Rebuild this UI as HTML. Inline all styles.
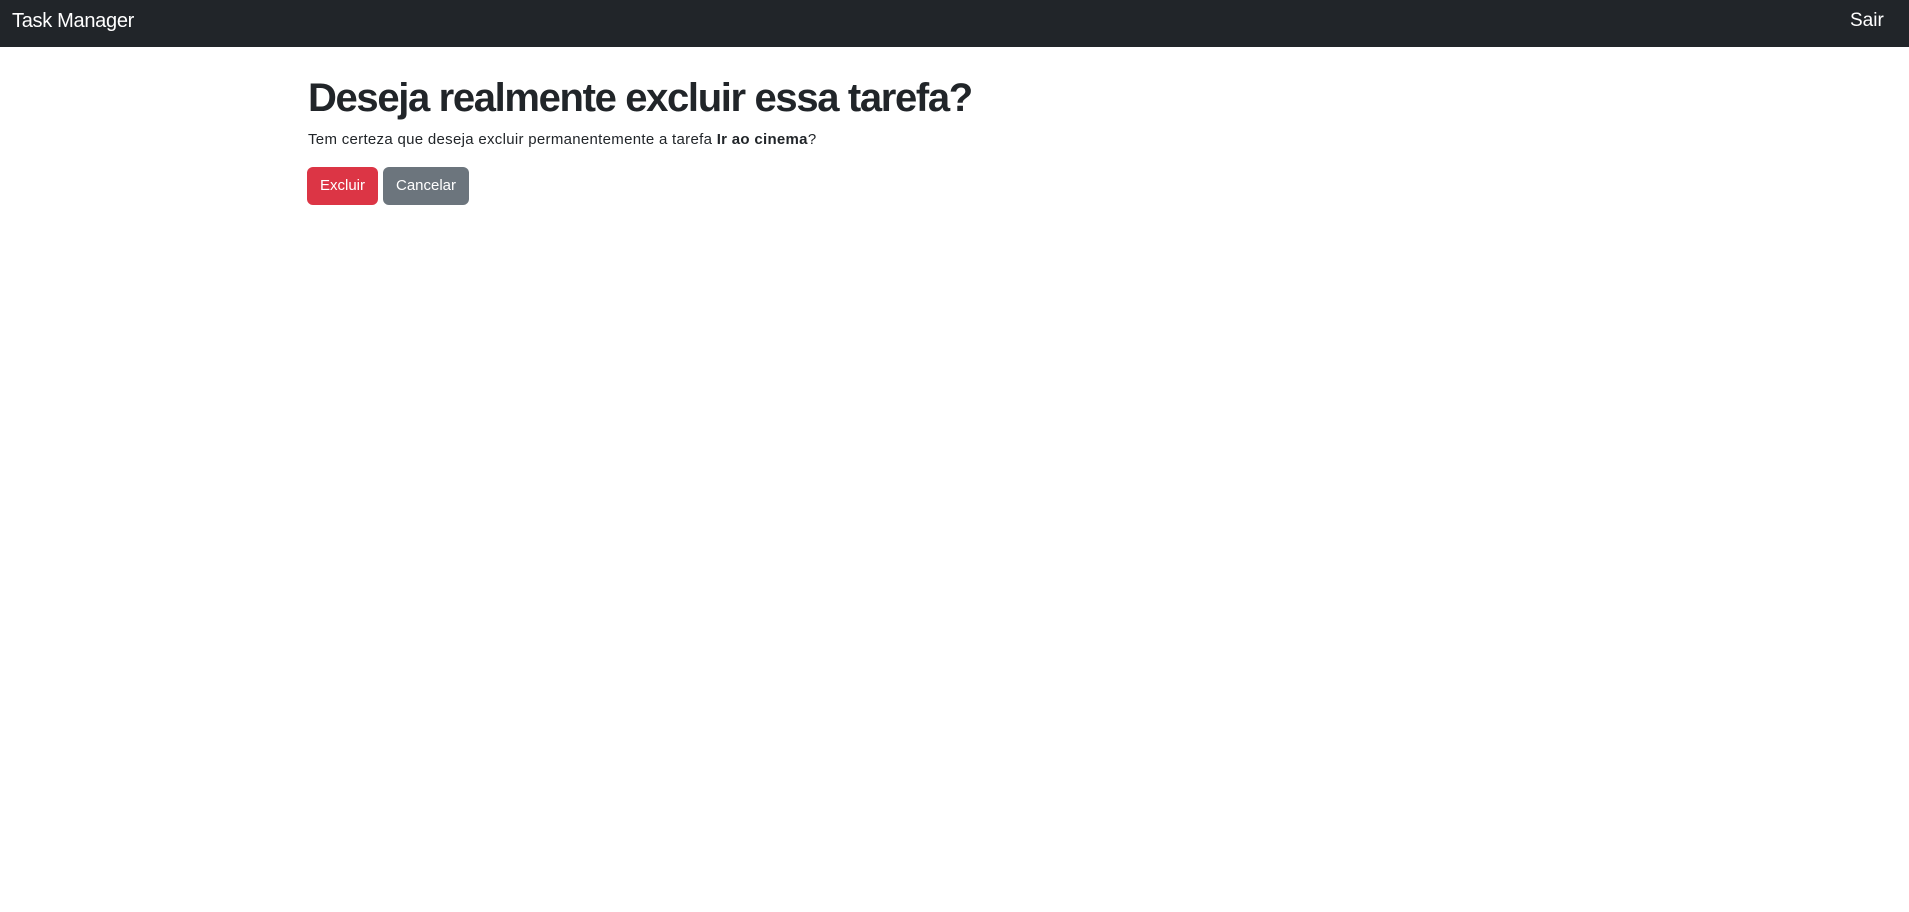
<!DOCTYPE html>
<html><head><meta charset="utf-8"><style>
body{margin:0;background:#fff;font-family:"Liberation Sans",sans-serif;color:#212529;}
.nav{height:47px;background:#212529;position:relative;color:#fff;}
.brand{position:absolute;left:12px;top:9px;font-size:20px;line-height:24px;letter-spacing:-0.3px}
.sair{position:absolute;left:1850px;top:9px;font-size:19px;line-height:24px}
h1{position:absolute;left:308px;top:74px;margin:0;font-size:40px;line-height:48px;font-weight:bold;white-space:nowrap;letter-spacing:-1.35px}
p{position:absolute;left:308px;top:131px;margin:0;font-size:15px;line-height:18px;white-space:nowrap;letter-spacing:0.3px}
.btn{position:absolute;top:167px;height:38px;border-radius:6px;color:#fff;font-size:15px;line-height:38px;text-align:center}
</style></head><body>
<div class="nav"><span class="brand">Task Manager</span><span class="sair">Sair</span></div>
<h1>Deseja realmente excluir essa tarefa?</h1>
<p>Tem certeza que deseja excluir permanentemente a tarefa <b>Ir ao cinema</b>?</p>
<div class="btn" style="left:307px;width:71px;background:#dc3545">Excluir</div>
<div class="btn" style="left:383px;width:86px;background:#6c757d">Cancelar</div>
</body></html>
